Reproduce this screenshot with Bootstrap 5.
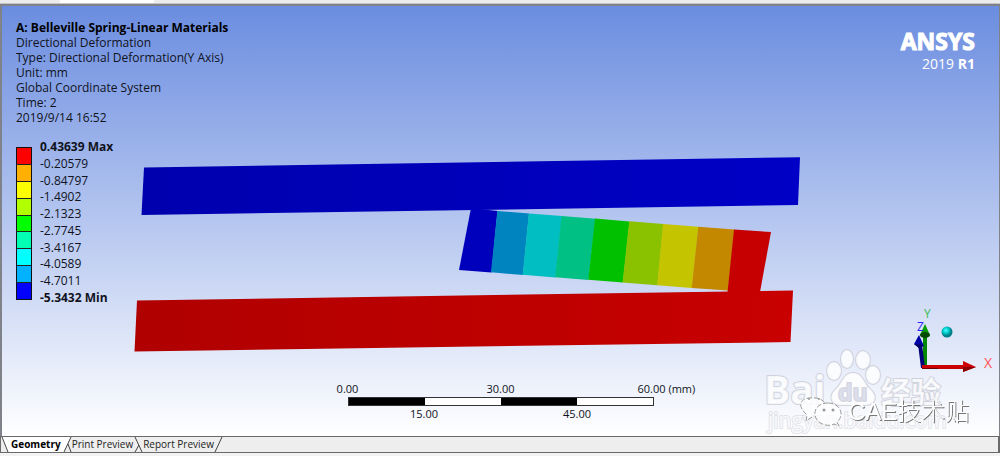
<!DOCTYPE html>
<html lang="en">
<head>
<meta charset="utf-8">
<meta name="viewport" content="width=device-width, initial-scale=1">
<title>Belleville Spring - Directional Deformation</title>
<link href="https://cdn.jsdelivr.net/npm/bootstrap@5.3.0/dist/css/bootstrap.min.css" rel="stylesheet">
<style>
  body { font-family: "Open Sans", "Noto Sans", sans-serif; font-size: 11px; line-height: 15px; color: #10131c; background: #f3f3f3; }
  .top-strip { height: 4px; background: #ececec; border-bottom: 1px solid #c4c4c4; }
  .top-strip span { width: 94px; margin-left: 60px; background: #fff; }
  .viewport { border: solid #808289; border-width: 2px 1px 0 2px; background: linear-gradient(#6b8de0, #fff); }
  .info { padding: 14px 0 0 14px; font-size: 12px; }
  .info h1 { font-size: 12px; line-height: 15px; color: #000; }
  .brand { padding: 20px 24px 0 0; color: #fff; }
  .brand-name { font-family: "Noto Sans", sans-serif; font-size: 23px; line-height: 30px; -webkit-text-stroke: 1px #fff; }
  .brand-version { font-size: 14px; line-height: 16px; }
  .legend { padding: 13px 0 0 14px; gap: 8px; font-size: 12px; }
  .swatches { width: 16px; height: 153px; margin-top: 9px; border: 1px solid #111; }
  .swatches i + i { border-top: 1px solid #222; }
  .ticks { height: 166px; margin-top: 1px; }
  .ruler { width: 306px; padding-bottom: 14px; }
  .ruler-bar { height: 9px; border: 1px solid #333; }
  .ruler-end { width: 80px; margin: 0 -40px; }
  .ruler-max { padding-left: 24px; }
  .ruler-row { line-height: 16px; height: 16px; }
  .triad { right: 0; bottom: 60px; }
  .watermark { right: 20px; bottom: 0; }
  .account { filter: drop-shadow(1px 1px 0 #777); }
  .tab-strip { height: 17px; border: solid #6a6a6a; border-width: 1px 2px 1px 1px; background: #eee; }
  .tab-strip button { font-size: 10px; line-height: 15px; color: #222; background: none; }
  .tab-strip button.active { background: #fff; color: #000; padding: 0 2px; }
  .tab-strip svg { flex: none; }
  .bottom-strip { height: 3px; }
</style>
</head>
<body class="d-flex flex-column min-vh-100">
<div class="top-strip d-flex"><span></span></div>

<main class="viewport position-relative flex-grow-1 d-flex flex-column">
  <svg class="position-absolute top-0 start-0 w-100 h-100" viewBox="2 6 997 430" aria-label="Deformed model">
    <defs>
      <linearGradient id="blue"><stop offset="0" stop-color="#0000ae"/><stop offset="1" stop-color="#0000c6"/></linearGradient>
      <linearGradient id="red"><stop offset="0" stop-color="#b00000"/><stop offset="1" stop-color="#c80000"/></linearGradient>
    </defs>
    <path fill="url(#red)" d="M137 300.500 793 290.500 790.500 342 134.500 351.500Z"/>
    <g>
      <path fill="#0000bc" d="M471 208 497.500 211 491.500 272.500 459 270Z"/>
      <path fill="#0084c0" d="M497.300 211 529 213.500 523 275 491 272.300Z"/>
      <path fill="#00bec2" d="M528.800 213.500 562 216 555.500 277.500 522.700 274.800Z"/>
      <path fill="#00c083" d="M561.500 216 595.500 218.700 588.500 280 555.200 277.300Z"/>
      <path fill="#00c000" d="M595 218.500 629.500 221.500 623 282.500 588.300 279.800Z"/>
      <path fill="#8ac200" d="M629.200 221.300 663.500 224 657.500 285.300 622.600 282.500Z"/>
      <path fill="#c4c400" d="M663 224 698.500 226.700 692 288 657.200 285.200Z"/>
      <path fill="#c48800" d="M698.300 226.700 734.500 229.500 728 290.500 691.700 288Z"/>
      <path fill="#c60000" d="M734 229.500 771 232 760 292 727.500 292Z"/>
    </g>
    <path fill="url(#blue)" d="M144 167.500 800 157.200 798 205 141.500 215Z"/>
  </svg>

  <div class="position-relative d-flex justify-content-between">
    <section class="info">
      <h1 class="fw-bold m-0">A: Belleville Spring-Linear Materials</h1>
      <div>Directional Deformation</div>
      <div>Type: Directional Deformation(Y Axis)</div>
      <div>Unit: mm</div>
      <div>Global Coordinate System</div>
      <div>Time: 2</div>
      <div>2019/9/14 16:52</div>
    </section>
    <div class="brand text-end">
      <div class="brand-name fw-bold">ANSYS</div>
      <div class="brand-version">2019 <b>R1</b></div>
    </div>
  </div>

  <section class="legend position-relative d-flex align-items-start" aria-label="Legend">
    <div class="swatches d-flex flex-column">
      <i class="flex-fill" style="background:#f00"></i><i class="flex-fill" style="background:#ffb000"></i><i class="flex-fill" style="background:#ff0"></i><i class="flex-fill" style="background:#b2ff00"></i><i class="flex-fill" style="background:#0f0"></i><i class="flex-fill" style="background:#00ffb2"></i><i class="flex-fill" style="background:#0ff"></i><i class="flex-fill" style="background:#00b2ff"></i><i class="flex-fill" style="background:#00f"></i>
    </div>
    <div class="ticks d-flex flex-column justify-content-between">
      <b>0.43639 Max</b><span>-0.20579</span><span>-0.84797</span><span>-1.4902</span><span>-2.1323</span><span>-2.7745</span><span>-3.4167</span><span>-4.0589</span><span>-4.7011</span><b>-5.3432 Min</b>
    </div>
  </section>

  <div class="ruler position-relative mx-auto mt-auto">
    <div class="ruler-row d-flex justify-content-between">
      <span class="ruler-end text-center">0.00</span>
      <span>30.00</span>
      <span class="ruler-end ruler-max text-nowrap">60.00 (mm)</span>
    </div>
    <div class="ruler-bar d-flex">
      <span class="w-25 bg-black"></span><span class="w-25 bg-white"></span><span class="w-25 bg-black"></span><span class="w-25 bg-white"></span>
    </div>
    <div class="ruler-row d-flex justify-content-around"><span>15.00</span><span>45.00</span></div>
  </div>

  <svg class="triad position-absolute" width="90" height="72" viewBox="908 304 90 72" aria-label="Axis triad">
    <defs><radialGradient id="ball" cx=".4" cy=".35"><stop offset="0" stop-color="#5ff"/><stop offset=".5" stop-color="#00cfcf"/><stop offset="1" stop-color="#007f88"/></radialGradient></defs>
    <path fill="#080" d="M922 334h4v32h-4z"/>
    <path fill="#009b00" d="M924 324 929 335H919Z"/><ellipse cx="924" cy="335" rx="5" ry="3" fill="#004a00"/>
    <path fill="#000078" d="M917 344h4l3 24h-4z"/>
    <path fill="#0000a8" d="M918 335 923 346 918 348 913 344Z"/><path fill="#000060" d="M913 344 923 345 918 348Z"/>
    <path fill="#c80000" d="M921 365h42v4h-42z"/><path fill="#700000" d="M921 368h16v1h-16z"/>
    <path fill="#d00000" d="M962 361 975 367 962 372Z"/><path fill="#8a0000" d="M962 367H975L962 372Z"/>
    <circle cx="946" cy="332" r="5.500" fill="url(#ball)"/>
    <g font-family="Open Sans, sans-serif" font-size="12"><text x="923" y="318" fill="#3dbb50">Y</text><text x="916" y="331" fill="#2525ff">Z</text><text x="983" y="368" font-size="14" fill="#ff5050">X</text></g>
  </svg>

  <svg class="watermark position-absolute" width="220" height="88" viewBox="760 348 220 88" aria-label="Watermark">
    <g fill="#fff" fill-opacity=".8" stroke="#c4c6d2" stroke-opacity=".7" stroke-width="2" stroke-linejoin="round" paint-order="stroke">
      <ellipse cx="835" cy="371" rx="7" ry="9"/><ellipse cx="848" cy="359" rx="6" ry="9"/><ellipse cx="864" cy="360" rx="7" ry="9"/><ellipse cx="874" cy="375" rx="7" ry="9"/>
      <path d="M854 373C844 373 843 384 837 389 829 396 832 405 842 405H866C877 405 879 396 871 389 865 384 864 373 854 373Z"/>
      <g font-family="Open Sans, Noto Sans CJK SC, sans-serif" font-weight="700">
        <text x="765" y="404" font-size="39">Bai</text>
        <text x="839" y="401" font-size="23" fill="#d8dbea">du</text>
        <text x="882" y="403" font-size="30">经验</text>
        <text x="769" y="428" font-size="21" font-weight="400" stroke-opacity=".45">jingyan.baidu.com</text>
      </g>
    </g>
    <g fill="#fff" fill-opacity=".75" stroke="#999" stroke-width="1" stroke-dasharray="5 2">
      <path d="M813 417 807 421 808 415C798 406 801 399 810 398 819 397 825 400 826 404"/>
      <path d="M829 403C816 403 812 415 820 422 825 426 832 426 835 424L840 426 838 422C847 414 840 403 829 403Z"/>
    </g>
    <g fill="#999"><circle cx="810" cy="399" r="1"/><circle cx="820" cy="399" r="1"/><circle cx="825" cy="410" r="1.500"/><circle cx="834" cy="410" r="1.500"/></g>
    <text class="account" x="849" y="420" fill="#fff" font-family="Liberation Sans, Noto Sans CJK SC, sans-serif" font-size="24" font-weight="300">CAE技术贴</text>
  </svg>
</main>

<nav class="tab-strip d-flex" aria-label="Views">
  <svg width="8" height="15"><path d="M0 0 7 15H8V0Z" fill="#fff"/><path d="M1 0 7 15" stroke="#444"/></svg>
  <button type="button" class="active fw-bold border-0">Geometry</button>
  <svg width="9" height="15"><path d="M0 0H8L1 15H0Z" fill="#fff"/><path d="M1 15 8 0M5 7 8 15" fill="none" stroke="#444"/></svg>
  <button type="button" class="border-0 p-0">Print Preview</button>
  <svg width="10" height="15"><path d="M2 0 9 15M2 15 6 8" fill="none" stroke="#444"/></svg>
  <button type="button" class="border-0 p-0">Report Preview</button>
  <svg width="9" height="15"><path d="M1 15 8 0" stroke="#444"/></svg>
</nav>
<div class="bottom-strip"></div>
<script src="https://cdn.jsdelivr.net/npm/bootstrap@5.3.0/dist/js/bootstrap.bundle.min.js"></script>
</body>
</html>
